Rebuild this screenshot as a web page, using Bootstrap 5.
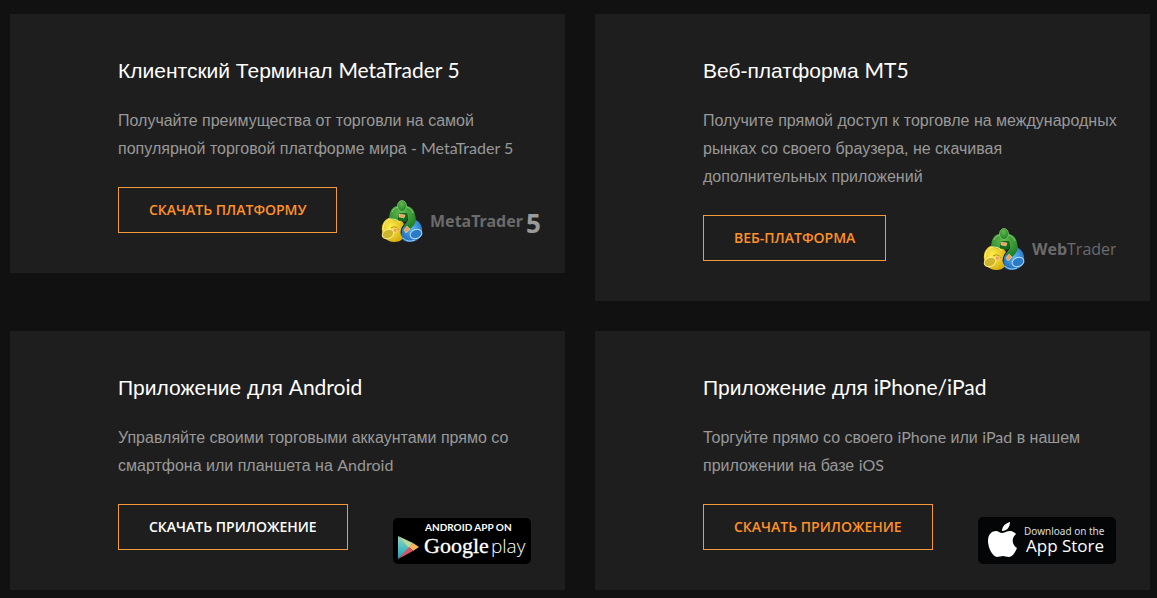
<!DOCTYPE html>
<html lang="ru">
<head>
<meta charset="utf-8">
<meta name="viewport" content="width=device-width, initial-scale=1">
<title>Платформы</title>
<link href="https://cdn.jsdelivr.net/npm/bootstrap@5.3.0/dist/css/bootstrap.min.css" rel="stylesheet">
<style>
  body { background: #111; color: #999; font-family: "Liberation Sans", sans-serif; }
  .latin { font-family: Lato, sans-serif; line-height: 1; }
  .platforms { padding: 14px 7px 8px 10px; }
  .platforms .row { --bs-gutter-x: 30px; --bs-gutter-y: 30px; margin-top: 0; }
  .platforms .row > * { margin-top: 0; margin-bottom: 30px; }
  .platforms .row > .last-line { margin-bottom: 0; }
  .platform { background: #1e1e1e; padding: 41px 24px 26px 108px; }
  .platform h2 { color: #fff; font-size: 21px; line-height: 32px; margin-bottom: 20px; font-weight: 400; }
  .platform p { font-size: 16px; line-height: 28px; margin: 0 8px 24px 0; }
  .btn-line { --bs-btn-color: #ff9129; --bs-btn-border-color: #f39a3c; --bs-btn-hover-color: #fff; --bs-btn-hover-border-color: #f39a3c;
    --bs-btn-border-radius: 0; --bs-btn-padding-x: 30px; --bs-btn-padding-y: 12px; --bs-btn-font-size: 14px; --bs-btn-line-height: 20px;
    --bs-btn-font-weight: 600; --bs-btn-font-family: "Open Sans", sans-serif; white-space: nowrap; }
  .btn-line.lit { --bs-btn-color: #fff; }
  .logo { margin-top: 13px; flex: none; }
  .logo.inset { margin-right: 10px; }
</style>
</head>
<body>
<svg width="0" height="0" class="position-absolute" aria-hidden="true">
  <defs>
    <radialGradient id="gr" cx=".45" cy=".3" r=".7"><stop offset="0" stop-color="#62b84c"/><stop offset="1" stop-color="#1f8026"/></radialGradient>
    <radialGradient id="ye" cx=".4" cy=".4" r=".7"><stop offset="0" stop-color="#fff04c"/><stop offset="1" stop-color="#d3a90c"/></radialGradient>
    <radialGradient id="bl" cx=".5" cy=".4" r=".7"><stop offset="0" stop-color="#5cb6f2"/><stop offset="1" stop-color="#155fb4"/></radialGradient>
    <symbol id="traders" viewBox="0 0 42 43">
      <path fill="url(#bl)" d="M30 19c8 0 12 7 11 13-1 7-6 10-13 10-3 0-6-1-8-4l1-9 4-6z"/>
      <path fill="url(#ye)" d="M11 17C4 18 0 24 1 31c1 7 6 11 12 11 4 0 7-1 9-4-3-3-3-7-1-11l2-3c-3-5-7-7-12-7z"/>
      <path fill="url(#gr)" d="M16 6C10 7 9 12 8 18l4 2 7 1-1-5h8l1 4-4 7 6 2c5-4 7-8 5-14-1-6-4-8-8-9z"/>
      <path fill="#15681f" d="m17 16 1-3h8l1 3-1 5-3 1-6-2z"/>
      <path fill="none" stroke="#8cd078" d="M11 12c1-3 3-4 6-5M26 7c3 1 5 3 6 6"/>
      <path fill="none" stroke="#a8dbf8" d="M22 38c3 3 7 4 12 2"/>
      <path fill="none" stroke="#fff08a" d="M2 30c0-6 3-10 8-11 4 0 7 1 9 4"/>
      <path fill="none" stroke="#ab8808" d="M10 28c3-2 6-1 8 2"/>
      <ellipse cx="21" cy="6" rx="4.500" ry="5.500" fill="url(#gr)" stroke="#8ed07b" stroke-width=".7"/>
      <ellipse cx="7" cy="34" rx="6" ry="4.500" fill="#cdb52c" stroke="#fff2a0" stroke-width=".9" transform="rotate(-25 7 34)"/>
      <ellipse cx="35" cy="34" rx="6" ry="4.500" fill="#2a7cc9" stroke="#b4e0fa" transform="rotate(-20 35 34)"/>
      <path fill="#f4a153" stroke="#ffe1b0" stroke-width=".5" d="m18 14 6 1-1 3-5-1zm-5 14 4 1-2 4-3-2zm13-2 3 3-4 4-2-3z"/>
    </symbol>
  </defs>
</svg>
<main class="platforms">
  <div class="row">
    <div class="col-12 col-md-6">
      <article class="platform">
        <h2>Клиентский Терминал <span class="latin">MetaTrader 5</span></h2>
        <p>Получайте преимущества от торговли на самой популярной торговой платформе мира - <span class="latin">MetaTrader 5</span></p>
        <div class="d-flex justify-content-between align-items-start">
          <button type="button" class="btn btn-line">СКАЧАТЬ ПЛАТФОРМУ</button>
          <svg class="logo" width="160" height="47" role="img" aria-label="MetaTrader 5">
            <use href="#traders" width="42" height="43"/>
            <text x="49" y="27" font-family="Noto Sans, sans-serif" font-weight="700" font-size="16" fill="#6b6b6b">MetaTrader</text>
            <text x="145" y="33" font-family="Noto Sans, sans-serif" font-weight="700" font-size="26" fill="#9a9a9a">5</text>
          </svg>
        </div>
      </article>
    </div>
    <div class="col-12 col-md-6">
      <article class="platform">
        <h2>Веб-платформа <span class="latin">MT5</span></h2>
        <p>Получите прямой доступ к торговле на международных рынках со своего браузера, не скачивая дополнительных приложений</p>
        <div class="d-flex justify-content-between align-items-start">
          <button type="button" class="btn btn-line">ВЕБ-ПЛАТФОРМА</button>
          <svg class="logo inset" width="133" height="47" role="img" aria-label="WebTrader">
            <use href="#traders" width="42" height="43"/>
            <text x="49" y="27" font-family="Open Sans, sans-serif" font-size="16" fill="#6b6b6b"><tspan font-weight="700">Web</tspan>Trader</text>
          </svg>
        </div>
      </article>
    </div>
    <div class="col-12 col-md-6 last-line">
      <article class="platform">
        <h2>Приложение для <span class="latin">Android</span></h2>
        <p>Управляйте своими торговыми аккаунтами прямо со смартфона или планшета на <span class="latin">Android</span></p>
        <div class="d-flex justify-content-between align-items-start">
          <button type="button" class="btn btn-line lit">СКАЧАТЬ ПРИЛОЖЕНИЕ</button>
          <svg class="logo inset" width="138" height="47" role="img" aria-label="Android app on Google play">
            <defs><linearGradient id="tq" x2="0" y2="1"><stop stop-color="#8fd7c4"/><stop offset="1" stop-color="#16a4b8"/></linearGradient></defs>
            <rect y="1" width="138" height="46" rx="5"/>
            <path fill="url(#tq)" d="M5 19v23l12-11z"/>
            <path fill="#b9d99a" d="m5 19 15 7-4 5z"/>
            <path fill="#f4b35c" d="m20 26 6 4-6 4-4-4z"/>
            <path fill="#d9536b" d="m5 42 11-12 4 4z"/>
            <text x="32" y="14" font-family="Lato, sans-serif" font-weight="700" font-size="10" fill="#fff">ANDROID APP ON</text>
            <text x="31" y="36" font-family="Liberation Serif, serif" font-size="22" fill="#fff" stroke="#fff" stroke-width=".3">Google</text>
            <text x="98" y="36" font-family="Open Sans, sans-serif" font-weight="300" font-size="19" fill="#fff">play</text>
          </svg>
        </div>
      </article>
    </div>
    <div class="col-12 col-md-6 last-line">
      <article class="platform">
        <h2>Приложение для <span class="latin">iPhone/iPad</span></h2>
        <p>Торгуйте прямо со своего <span class="latin">iPhone</span> или <span class="latin">iPad</span> в нашем приложении на базе <span class="latin">iOS</span></p>
        <div class="d-flex justify-content-between align-items-start">
          <button type="button" class="btn btn-line">СКАЧАТЬ ПРИЛОЖЕНИЕ</button>
          <svg class="logo inset" width="138" height="47" role="img" aria-label="Download on the App Store">
            <rect width="138" height="47" rx="5" fill="#040506"/>
            <path fill="#fff" d="M32 5c0 5-3 9-8 9 0-5 4-8 8-9zM24 16c2 0 5-2 8-2 3 0 5 2 6 3-5 4-4 11 1 14-2 5-5 9-8 9s-4-1-6-1-4 1-6 1c-4 0-9-9-9-16s4-10 8-10c2 0 4 2 6 2z"/>
            <text x="46" y="18" font-family="Noto Sans, sans-serif" font-size="10" fill="#ddd">Download on the</text>
            <text x="48" y="35" font-family="Open Sans, sans-serif" font-size="17" fill="#fff">App Store</text>
          </svg>
        </div>
      </article>
    </div>
  </div>
</main>
<script src="https://cdn.jsdelivr.net/npm/bootstrap@5.3.0/dist/js/bootstrap.bundle.min.js"></script>
</body>
</html>
